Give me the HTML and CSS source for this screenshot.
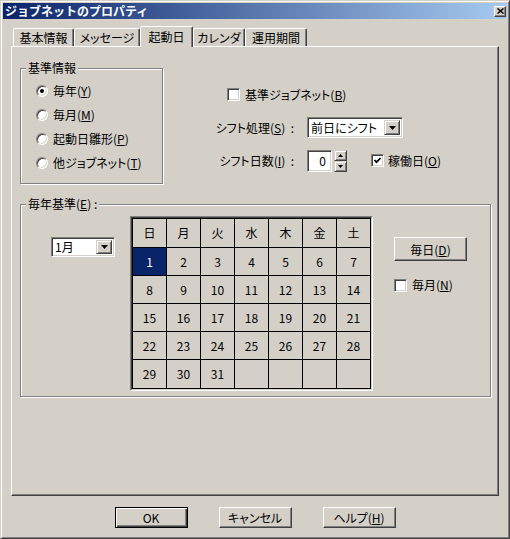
FILE: index.html
```html
<!DOCTYPE html>
<html lang="ja">
<head>
<meta charset="utf-8">
<title>ジョブネットのプロパティ</title>
<link rel="stylesheet" href="styles.css">
</head>
<body>
<div class="window">
  <div class="titlebar">
    <span class="title">ジョブネットのプロパティ</span>
    <span class="close"><svg width="7" height="6" viewBox="0 0 7 6"><path d="M0.5 0.5 L6.5 5.5 M6.5 0.5 L0.5 5.5" stroke="#000" stroke-width="1.5" fill="none"/></svg></span>
  </div>
  <div class="tabs">
    <div class="tab w1">基本情報</div>
    <div class="tab w2">メッセージ</div>
    <div class="tab w3 active">起動日</div>
    <div class="tab w4">カレンダ</div>
    <div class="tab w5">運用期間</div>
  </div>
  <div class="panel">
    <div class="top-row">
      <fieldset class="group g1">
        <legend>基準情報</legend>
        <div class="radio-row"><span class="radio checked"></span><span>毎年(<u>Y</u>)</span></div>
        <div class="radio-row"><span class="radio"></span><span>毎月(<u>M</u>)</span></div>
        <div class="radio-row"><span class="radio"></span><span>起動日雛形(<u>P</u>)</span></div>
        <div class="radio-row"><span class="radio"></span><span>他ジョブネット(<u>T</u>)</span></div>
      </fieldset>
      <div class="right-col">
        <div class="row">
          <span class="checkbox first"></span><span class="lbl">基準ジョブネット(<u>B</u>)</span>
        </div>
        <div class="row">
          <span class="field-label">シフト処理(<u>S</u>) &nbsp;:</span>
          <div class="combo shift">
            <span class="combo-text">前日にシフト</span>
            <span class="drop-btn"><svg width="7" height="4" viewBox="0 0 7 4"><path d="M0 0 H7 L3.5 4 Z" fill="#000"/></svg></span>
          </div>
        </div>
        <div class="row">
          <span class="field-label">シフト日数(<u>I</u>) &nbsp;:</span>
          <div class="spin-edit">0</div>
          <div class="spinner">
            <span class="spin-btn"><svg width="5" height="3" viewBox="0 0 5 3"><path d="M2.5 0 L5 3 H0 Z" fill="#000"/></svg></span>
            <span class="spin-btn"><svg width="5" height="3" viewBox="0 0 5 3"><path d="M0 0 H5 L2.5 3 Z" fill="#000"/></svg></span>
          </div>
          <span class="checkbox work"><svg width="7" height="7" viewBox="0 0 7 7"><path d="M0.5 3 L2.5 5.2 L6.5 1" stroke="#000" stroke-width="1.8" fill="none"/></svg></span>
          <span class="lbl">稼働日(<u>O</u>)</span>
        </div>
      </div>
    </div>
    <fieldset class="group g2">
      <legend>毎年基準(<u>E</u>) :</legend>
      <div class="g2-body">
        <div class="combo month">
          <span class="combo-text">1月</span>
          <span class="drop-btn"><svg width="7" height="4" viewBox="0 0 7 4"><path d="M0 0 H7 L3.5 4 Z" fill="#000"/></svg></span>
        </div>
        <div class="cal-frame">
          <div class="calendar">
            <div class="cell">日</div><div class="cell">月</div><div class="cell">火</div><div class="cell">水</div><div class="cell">木</div><div class="cell">金</div><div class="cell">土</div>
            <div class="cell sel">1</div><div class="cell">2</div><div class="cell">3</div><div class="cell">4</div><div class="cell">5</div><div class="cell">6</div><div class="cell">7</div>
            <div class="cell">8</div><div class="cell">9</div><div class="cell">10</div><div class="cell">11</div><div class="cell">12</div><div class="cell">13</div><div class="cell">14</div>
            <div class="cell">15</div><div class="cell">16</div><div class="cell">17</div><div class="cell">18</div><div class="cell">19</div><div class="cell">20</div><div class="cell">21</div>
            <div class="cell">22</div><div class="cell">23</div><div class="cell">24</div><div class="cell">25</div><div class="cell">26</div><div class="cell">27</div><div class="cell">28</div>
            <div class="cell">29</div><div class="cell">30</div><div class="cell">31</div><div class="cell"></div><div class="cell"></div><div class="cell"></div><div class="cell"></div>
          </div>
        </div>
        <div class="side">
          <button class="btn daily">毎日(<u>D</u>)</button>
          <div class="check-row"><span class="checkbox"></span><span class="lbl">毎月(<u>N</u>)</span></div>
        </div>
      </div>
    </fieldset>
  </div>
  <div class="buttons">
    <button class="btn default">OK</button>
    <button class="btn">キャンセル</button>
    <button class="btn">ヘルプ(<u>H</u>)</button>
  </div>
</div>
</body>
</html>
```
FILE: styles.css
```css
* { box-sizing: border-box; }
html, body { margin: 0; padding: 0; }
body {
  width: 510px;
  height: 539px;
  background: #d4d0c8;
  font-family: "Noto Sans CJK JP", "Noto Sans", sans-serif;
  font-size: 12px;
  line-height: 14px;
  color: #000;
  font-feature-settings: "palt";
}
u { text-decoration: underline; text-underline-offset: 1px; }

.window {
  width: 510px;
  height: 539px;
  background: #d4d0c8;
  border: 1px solid;
  border-color: #d4d0c8 #404040 #404040 #d4d0c8;
  box-shadow: inset 1px 1px 0 #fff, inset -1px -1px 0 #808080;
  padding: 2px;
  display: flex;
  flex-direction: column;
}

.titlebar {
  height: 16px;
  background: linear-gradient(to right, #0a246a, #a6caf0);
  display: flex;
  align-items: center;
  justify-content: space-between;
  padding: 0 1px 0 2px;
}
.title {
  color: #fff;
  font-weight: bold;
  font-size: 12px;
  line-height: 16px;
  font-feature-settings: normal;
}
.close {
  width: 12px;
  height: 11px;
  background: #d4d0c8;
  border: 1px solid;
  border-color: #fff #404040 #404040 #fff;
  box-shadow: inset -1px -1px 0 #808080;
  display: flex;
  align-items: center;
  justify-content: center;
}

.tabs {
  display: flex;
  align-items: flex-end;
  height: 20px;
  margin: 7px 8px 0 8px;
  padding-left: 2px;
}
.tab {
  height: 18px;
  border: 1px solid;
  border-bottom: none;
  border-color: #fff #404040 transparent #fff;
  box-shadow: inset -1px 0 0 #808080;
  border-radius: 2px 2px 0 0;
  text-align: center;
  line-height: 17px;
  background: #d4d0c8;
}
.tab.w1 { width: 61px; }
.tab.w2 { width: 66px; }
.tab.w3 { width: 53px; }
.tab.w4 { width: 52px; }
.tab.w5 { width: 62px; }
.tab.active {
  height: 21px;
  margin-bottom: -1px;
  line-height: 19px;
  position: relative;
  z-index: 1;
}

.panel {
  margin: 0 8px;
  height: 450px;
  border: 1px solid;
  border-color: #fff #404040 #404040 #fff;
  box-shadow: inset -1px -1px 0 #808080;
  padding: 14px 8px 0 8px;
}

.top-row { display: flex; align-items: flex-start; }

.group {
  margin: 0;
  min-width: 0;
  border: 1px solid #808080;
  box-shadow: inset 1px 1px 0 #fff, 1px 1px 0 #fff;
}
.group legend {
  padding: 0 2px;
  line-height: 14px;
  background: #d4d0c8;
}
.g1 { width: 143px; padding: 4px 5px 8px 5px; }
.g2 { width: 471px; margin-top: 13px; padding: 5px 5px 5px 5px; }

.radio-row {
  height: 24px;
  display: flex;
  align-items: center;
  gap: 5px;
  padding-left: 10px;
}
.radio {
  width: 12px;
  height: 12px;
  border-radius: 50%;
  background: #fff;
  border: 1px solid;
  border-color: #808080 #fff #fff #808080;
  box-shadow: inset 1px 1px 0 #404040, inset -1px -1px 0 #d4d0c8;
  display: flex;
  align-items: center;
  justify-content: center;
  flex: none;
}
.radio.checked::after {
  content: "";
  width: 4px;
  height: 4px;
  border-radius: 50%;
  background: #000;
}

.checkbox {
  width: 13px;
  height: 13px;
  flex: none;
  background: #fff;
  border: 1px solid;
  border-color: #808080 #fff #fff #808080;
  box-shadow: inset 1px 1px 0 #404040, inset -1px -1px 0 #d4d0c8;
  display: flex;
  align-items: center;
  justify-content: center;
}

.right-col { margin-left: 50px; padding-top: 17px; }
.row { height: 33px; display: flex; align-items: center; }
.checkbox.first { margin-left: 14px; }
.row .lbl, .check-row .lbl { margin-left: 5px; white-space: nowrap; }
.checkbox.work { margin-left: 24px; }
.checkbox.work + .lbl { margin-left: 4px; }
.field-label { width: 81px; text-align: right; white-space: nowrap; margin-right: 13px; }

.combo {
  background: #fff;
  border: 1px solid;
  border-color: #808080 #fff #fff #808080;
  box-shadow: inset 1px 1px 0 #404040, inset -1px -1px 0 #d4d0c8;
  display: flex;
  align-items: center;
  justify-content: space-between;
  padding: 2px 2px 2px 3px;
}
.combo.shift { width: 96px; height: 21px; }
.combo.month { width: 64px; height: 20px; margin: 21px 0 0 25px; padding-left: 3px; }
.combo-text { white-space: nowrap; }
.drop-btn {
  width: 16px;
  align-self: stretch;
  background: #d4d0c8;
  border: 1px solid;
  border-color: #d4d0c8 #404040 #404040 #d4d0c8;
  box-shadow: inset 1px 1px 0 #fff, inset -1px -1px 0 #808080;
  display: flex;
  align-items: center;
  justify-content: center;
}

.spin-edit {
  width: 25px;
  height: 22px;
  background: #fff;
  border: 1px solid;
  border-color: #808080 #fff #fff #808080;
  box-shadow: inset 1px 1px 0 #404040, inset -1px -1px 0 #d4d0c8;
  text-align: right;
  padding-right: 5px;
  line-height: 20px;
}
.spinner { display: flex; flex-direction: column; margin-left: 2px; }
.spin-btn {
  width: 13px;
  height: 11px;
  background: #d4d0c8;
  border: 1px solid;
  border-color: #d4d0c8 #404040 #404040 #d4d0c8;
  box-shadow: inset 1px 1px 0 #fff, inset -1px -1px 0 #808080;
  display: flex;
  align-items: center;
  justify-content: center;
}

.g2-body { display: flex; align-items: flex-start; }
.cal-frame {
  margin-left: 15px;
  border: 1px solid;
  border-color: #808080 #fff #fff #808080;
}
.calendar {
  border: 1px solid;
  border-color: #404040 #d4d0c8 #d4d0c8 #404040;
  background: #000;
  padding: 1px;
  display: grid;
  grid-template-columns: repeat(7, 33px);
  grid-template-rows: 28px repeat(4, 27px) 28px;
  gap: 1px;
}
.cell {
  background: #d4d0c8;
  display: flex;
  align-items: center;
  justify-content: center;
}
.cell.sel { background: #0a246a; color: #fff; }

.side { margin: 21px 0 0 21px; }
.check-row { display: flex; align-items: center; margin-top: 17px; }

.btn {
  font: inherit;
  font-feature-settings: "palt";
  color: #000;
  width: 73px;
  height: 21px;
  padding: 0;
  background: #d4d0c8;
  border: 1px solid;
  border-color: #fff #404040 #404040 #fff;
  box-shadow: inset -1px -1px 0 #808080;
  line-height: 17px;
  display: block;
}
.btn.default {
  border-color: #000;
  box-shadow: inset 1px 1px 0 #fff, inset -1px -1px 0 #404040, inset -2px -2px 0 #808080;
}
.btn.daily { height: 24px; }
.buttons {
  display: flex;
  justify-content: center;
  gap: 31px;
  margin-top: 11px;
}
```
